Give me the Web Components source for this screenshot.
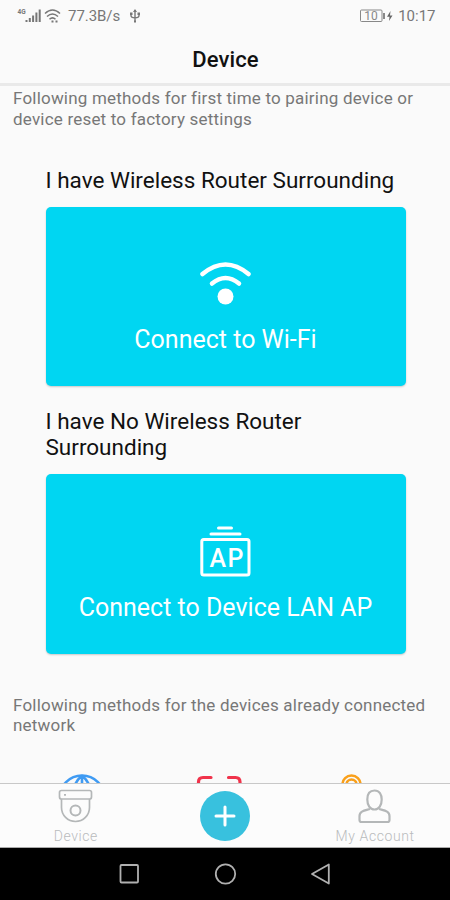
<!DOCTYPE html>
<html lang="en">
<head>
<meta charset="utf-8">
<meta name="viewport" content="width=device-width, initial-scale=1">
<title>Device</title>
<style>
    html, body { margin: 0; height: 100%; }
    body { font-family: Roboto, "Liberation Sans", sans-serif; background: #fafafa; overflow: hidden; }
</style>
</head>
<body>
<app-screen>
    <status-bar slot="top" speed="77.3B/s" battery="10" time="10:17"></status-bar>
    <title-bar slot="top">Device</title-bar>

    <section-note>Following methods for first time to pairing device or<br>device reset to factory settings</section-note>
    <connect-option class="wifi" label="Connect to Wi-Fi">
        <span slot="heading">I have Wireless Router Surrounding</span>
        <svg slot="icon" width="54" height="48" viewBox="0 0 54 48" fill="none" stroke="#fff" stroke-width="4.500" stroke-linecap="round">
            <path d="M3.500 13Q26.500 -6 49.500 13"/>
            <path d="M13 22.500Q26.500 11.500 40 22.500"/>
            <circle cx="26.500" cy="35.500" r="8" fill="#fff" stroke="none"/>
        </svg>
    </connect-option>
    <connect-option class="lan" label="Connect to Device LAN AP">
        <span slot="heading">I have No Wireless Router<br>Surrounding</span>
        <svg slot="icon" width="54" height="54" viewBox="0 0 54 54" fill="none" stroke="#fff" stroke-width="3" stroke-linecap="round">
            <path d="M19.500 5H32.500M12 11H41"/>
            <rect x="2.800" y="16.500" width="47.200" height="35.500" rx="2"/>
            <text x="10.500" y="43.500" font-family="Roboto, sans-serif" font-size="25" font-weight="500" letter-spacing="1.500" fill="#fff" stroke="none">AP</text>
        </svg>
    </connect-option>
    <section-note class="second">Following methods for the devices already connected<br>network</section-note>
    <method-row></method-row>

    <tab-bar slot="bottom">
        <tab-item label="Device">
            <svg width="36" height="36" viewBox="0 0 36 36" fill="none" stroke="#b4b7b8" stroke-width="1.700">
                <rect x="1.500" y="1.500" width="32" height="8.500" rx="2"/>
                <path d="M3.500 10V18.500A14 14 0 0 0 31.500 18.500V10"/>
                <circle cx="17.500" cy="21.500" r="5" stroke-width="2"/>
                <path d="M6 5.800H8"/>
            </svg>
        </tab-item>
        <add-button></add-button>
        <tab-item label="My Account">
            <svg width="36" height="36" viewBox="0 0 36 36" fill="none" stroke="#b4b7b8" stroke-width="2.200" stroke-linejoin="round">
                <path d="M13 20C8 21.500 2.500 22 2.500 27V31Q2.500 33 4.500 33H30.500Q32.500 33 32.500 31V27C32.500 22 27 21.500 22 20"/>
                <path d="M17.500 1.500C12.500 1.500 10.300 5.500 10.300 10.500C10.300 16 13 20.500 17.500 20.500C22 20.500 24.700 16 24.700 10.500C24.700 5.500 22.500 1.500 17.500 1.500Z"/>
            </svg>
        </tab-item>
    </tab-bar>
    <system-nav slot="bottom"></system-nav>
</app-screen>

<script>
// Shared helper: opens the shadow root and fills it
class BaseElement extends HTMLElement {
    constructor() {
        super();
        this.attachShadow({ mode: 'open' });
    }

    connectedCallback() {
        this.shadowRoot.innerHTML = this.template();
    }
}

class AppScreen extends BaseElement {
    template() {
        return `
            <style>
                :host { display: flex; flex-direction: column; width: 450px; height: 900px; overflow: hidden; }
                header, footer { flex: none; }
                main { flex: 1; min-height: 0; overflow: hidden; }
            </style>
            <header><slot name="top"></slot></header>
            <main><slot></slot></main>
            <footer><slot name="bottom"></slot></footer>
        `;
    }
}
customElements.define('app-screen', AppScreen);

class StatusBar extends BaseElement {
    template() {
        return `
            <style>
                :host { display: flex; justify-content: space-between; height: 32px; box-sizing: border-box; padding: 0 14.500px 0 17px; color: #777; font-size: 15px; }
                div { display: flex; align-items: center; }
                svg { flex: none; }
                .speed { margin-left: 7px; letter-spacing: -0.05px; }
                .usb { margin-left: 9px; }
                .time { margin-left: 4px; }
            </style>
            <div>
                <svg width="44" height="18" viewBox="0 0 44 18" fill="none" stroke="#777">
                    <text x="0.500" y="6.500" font-family="Roboto, sans-serif" font-size="6.500" font-weight="700" fill="#777" stroke="none">4G</text>
                    <path stroke-width="2" d="M9.500 15V13M12.800 15V11M16.100 15V8.500M19.400 15V5.500M22.700 15V2.500"/>
                    <path stroke-width="1.500" d="M28 6.500Q35.500 -0.500 43 6.500M30 9.500Q35.500 4.500 41 9.500M32.500 12.200Q35.500 9.500 38.500 12.200"/>
                    <path stroke-width="2" d="M34.500 14.500H36.500M38.500 14.500H40.500"/>
                </svg>
                <span class="speed">${this.getAttribute('speed')}</span>
                <svg class="usb" width="12" height="16" viewBox="0 0 12 16" fill="none" stroke="#777" stroke-width="1.400">
                    <path d="M6 14V2M2 5.500V7.500Q2 9.800 6 9.800Q10 9.800 10 7.500V5.500"/>
                    <path fill="#777" stroke="none" d="M6 1L8 4H4ZM1 4.500H3.500V7H1ZM8.500 4.500H11V7H8.500ZM5 12.500H7V14.500H5Z"/>
                </svg>
            </div>
            <div>
                <svg width="35" height="14" viewBox="0 0 35 14" fill="none" stroke="#888">
                    <rect x="1.500" y="1" width="21.500" height="11.500" rx="1"/>
                    <path stroke-width="2" d="M25 4V10"/>
                    <text x="12" y="11" text-anchor="middle" font-family="Roboto, sans-serif" font-size="12" fill="#888" stroke="none">${this.getAttribute('battery')}</text>
                    <path fill="#666" stroke="none" d="M31.500 2L28 7.700H30.500L30 12L33.500 6.500H31Z"/>
                </svg>
                <span class="time">${this.getAttribute('time')}</span>
            </div>
        `;
    }
}
customElements.define('status-bar', StatusBar);

class TitleBar extends BaseElement {
    template() {
        return `
            <style>
                :host { display: flex; align-items: center; justify-content: center; height: 54px; box-sizing: border-box; border-bottom: 3px solid #e9e9e9; padding: 3px 0 0 1px; color: #111; font-size: 22px; font-weight: 500; letter-spacing: 0.1px; }
            </style>
            <slot></slot>
        `;
    }
}
customElements.define('title-bar', TitleBar);

class SectionNote extends BaseElement {
    template() {
        return `
            <style>
                :host { display: block; padding: 2px 13px 0; color: #777; font-size: 17px; line-height: 20.500px; letter-spacing: 0.2px; white-space: nowrap; }
                :host(.second) { padding-top: 41px; }
            </style>
            <slot></slot>
        `;
    }
}
customElements.define('section-note', SectionNote);

// Heading with a large coloured button under it
class ConnectOption extends BaseElement {
    template() {
        return `
            <style>
                :host { display: block; margin: 0 44.500px 0 45.500px; }
                :host(.wifi) { padding-top: 37.500px; }
                :host(.lan) { padding-top: 22px; }
                .heading { color: #111; font-size: 22.500px; line-height: 26px; white-space: nowrap; margin-bottom: 14px; }
                button { display: flex; flex-direction: column; align-items: center; justify-content: flex-end; box-sizing: border-box; width: 360px; height: 179.500px; padding: 0 0 31px; border: 0; border-radius: 5px; background: #00d6f2; color: #fff; font: 25px/30px Roboto, sans-serif; box-shadow: 0 1px 2px rgba(0, 0, 0, 0.2); }
                .label { margin-top: 16px; }
            </style>
            <div class="heading"><slot name="heading"></slot></div>
            <button>
                <slot name="icon"></slot>
                <span class="label">${this.getAttribute('label')}</span>
            </button>
        `;
    }
}
customElements.define('connect-option', ConnectOption);

// Icons of the other methods, mostly hidden behind the tab bar
class MethodRow extends BaseElement {
    template() {
        return `
            <style>
                :host { display: flex; justify-content: space-between; padding: 37px 63px 0 57px; }
            </style>
            <svg width="50" height="50" viewBox="0 0 50 50" fill="none" stroke="#3f9bf3" stroke-width="2.600">
                <circle cx="25" cy="25" r="22.500"/>
                <path d="M25 2.500V47.500M2.500 25H47.500M25 2.500C12 14 12 36 25 47.500M25 2.500C38 14 38 36 25 47.500"/>
            </svg>
            <svg width="54" height="50" viewBox="0 0 54 50" fill="none" stroke="#f0334b" stroke-width="3.200" stroke-linecap="round">
                <path d="M3.500 14V9Q3.500 4.500 8 4.500H16M33.500 4.500H40.500Q45 4.500 45 9V14M3.500 36V42Q3.500 46 8 46H16M33.500 46H40.500Q45 46 45 42V36"/>
            </svg>
            <svg width="50" height="50" viewBox="0 0 50 50" fill="none" stroke="#f9a01b" stroke-width="2.500">
                <circle cx="14.500" cy="11.500" r="9"/>
                <circle cx="14.500" cy="11.500" r="5"/>
            </svg>
        `;
    }
}
customElements.define('method-row', MethodRow);

class TabBar extends BaseElement {
    template() {
        return `
            <style>
                :host { display: grid; grid-template-columns: repeat(3, 1fr); height: 65px; box-sizing: border-box; padding-left: 1px; border-top: 1px solid #c8c8c8; border-bottom: 1px solid #aaa; background: #fcfcfc; }
            </style>
            <slot></slot>
        `;
    }
}
customElements.define('tab-bar', TabBar);

class TabItem extends BaseElement {
    template() {
        return `
            <style>
                :host { display: flex; flex-direction: column; align-items: center; padding-top: 5px; color: #b9bbbc; font-size: 14px; line-height: 18px; letter-spacing: 0.600px; font-weight: 300; }
                span { margin-top: 2px; }
            </style>
            <slot></slot>
            <span>${this.getAttribute('label')}</span>
        `;
    }
}
customElements.define('tab-item', TabItem);

class AddButton extends BaseElement {
    template() {
        return `
            <style>
                :host { display: flex; align-items: center; justify-content: center; }
            </style>
            <svg width="50" height="50" viewBox="0 0 50 50">
                <circle cx="25" cy="25" r="25" fill="#38c1de"/>
                <path d="M25 16V34M16 25H34" stroke="#fff" stroke-width="3" stroke-linecap="round"/>
            </svg>
        `;
    }
}
customElements.define('add-button', AddButton);

// Android navigation keys
class SystemNav extends BaseElement {
    template() {
        return `
            <style>
                :host { display: flex; align-items: center; justify-content: center; gap: 72px; height: 52px; background: #000; }
            </style>
            <svg width="24" height="24" viewBox="0 0 24 24" fill="none" stroke="#b0b0b0" stroke-width="1.800">
                <rect x="3.500" y="3" width="17.500" height="17.500" rx="1"/>
            </svg>
            <svg width="24" height="24" viewBox="0 0 24 24" fill="none" stroke="#b0b0b0" stroke-width="1.800">
                <circle cx="12.500" cy="12" r="9.700"/>
            </svg>
            <svg width="24" height="24" viewBox="0 0 24 24" fill="none" stroke="#b0b0b0" stroke-width="1.800" stroke-linejoin="round">
                <path d="M19.800 2.500V21.500L3 12Z"/>
            </svg>
        `;
    }
}
customElements.define('system-nav', SystemNav);
</script>
</body>
</html>
